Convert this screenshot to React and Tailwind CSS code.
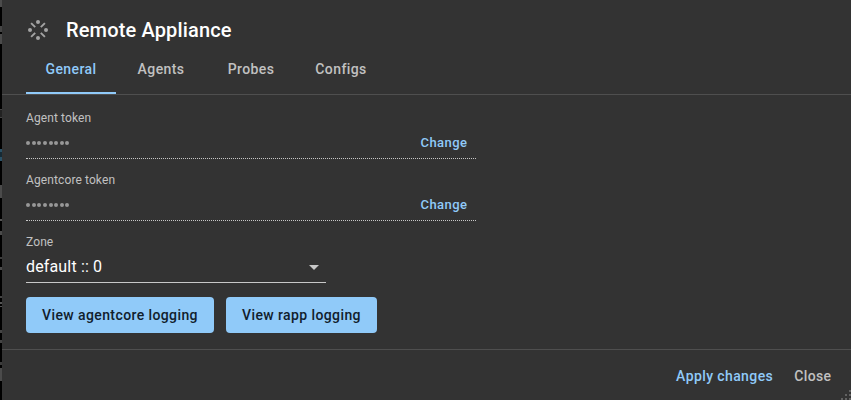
const slivers = [
  [0, 7, '#4b4b4b'], [26, 6, '#454545'], [34, 10, '#4b4b4b'], [109, 1, '#444444'], [110, 7, '#222222'], [117, 1, '#444444'],
  [149, 3, '#2b5267'], [152, 5, '#152a35'], [157, 4, '#2b5267'], [185, 13, '#4b4b4b'], [219, 2, '#555555'], [231, 4, '#4b4b4b'],
  [257, 2, '#3c3c3c'], [267, 3, '#4b4b4b'], [296, 2, '#444444'], [302, 2, '#555555'], [306, 1, '#555555'],
  [330, 3, '#444444'], [340, 3, '#444444'], [362, 3, '#3c3c3c'], [368, 13, '#4b4b4b'],
];

function PageSliver() {
  return (
    <div className="relative h-[400px] w-[2px] shrink-0 bg-black">
      {slivers.map(([y, h, color]) => (
        <div key={y} className="absolute left-0 w-[2px]" style={{ top: y, height: h, background: color }} />
      ))}
    </div>
  );
}

function HubIcon() {
  return (
    <svg width="24" height="24" viewBox="0 0 24 24" className="shrink-0 text-[#a4a4a4]" fill="currentColor">
      <circle cx="12" cy="4" r="2" />
      <circle cx="12" cy="20" r="2" />
      <circle cx="4" cy="12" r="2" />
      <circle cx="20" cy="12" r="2" />
      <path
        d="M5.1 5.1l4.1 4.1M18.9 5.1l-4.1 4.1M5.1 18.9l4.1-4.1M18.9 18.9l-4.1-4.1"
        stroke="currentColor"
        strokeWidth="1.9"
        fill="none"
      />
    </svg>
  );
}

function Tab({ label, active }) {
  return (
    <button
      className={
        'h-12 w-[90px] text-sm font-medium tracking-[0.4px] ' +
        (active ? 'border-b-2 border-[#90caf9] text-[#90caf9]' : 'pb-[2px] text-[#c1c1c1]')
      }
    >
      {label}
    </button>
  );
}

function TokenField({ label }) {
  return (
    <div className="h-[62px] w-[450px]">
      <div className="h-4 text-xs leading-4 tracking-[0.11px] text-[#c1c1c1]">{label}</div>
      <div className="flex h-8 items-center justify-between pr-[8.5px]">
        <div className="flex gap-[1.55px] pl-[0.4px] pt-px">
          {Array.from({ length: 8 }, (_, i) => (
            <span key={i} className="h-[4px] w-[4px] rounded-full bg-[#989898]" />
          ))}
        </div>
        <button className="pt-px text-[13px] font-medium tracking-[0.46px] text-[#90caf9]">Change</button>
      </div>
      <svg width="450" height="1" className="block" shapeRendering="crispEdges">
        <line x1="1" y1="0.5" x2="450" y2="0.5" stroke="#c8c8c8" strokeDasharray="1 1" />
        <line x1="0" y1="0.5" x2="1" y2="0.5" stroke="#c8c8c8" />
      </svg>
    </div>
  );
}

function LogButton({ label, className }) {
  return (
    <button
      className={
        'h-9 rounded-[4px] bg-[#90caf9] text-center text-sm font-medium tracking-[0.4px] text-[#11202c] ' + className
      }
    >
      {label}
    </button>
  );
}

export default function App() {
  return (
    <div className="flex h-[400px] w-[851px] overflow-hidden bg-black font-['Roboto',sans-serif]">
      <PageSliver />
      <div className="relative flex w-[849px] flex-col bg-[#333333]">
        <header className="flex h-[46px] items-center gap-4 pt-[14px] pl-6">
          <HubIcon />
          <h1 className="text-xl leading-8 font-medium tracking-[0.15px] text-white">Remote Appliance</h1>
        </header>
        <nav className="flex h-[49px] border-b border-[#4f4f4f] pl-6">
          <Tab label="General" active />
          <Tab label="Agents" />
          <Tab label="Probes" />
          <Tab label="Configs" />
        </nav>
        <main className="h-[254px] pt-[15px] pl-6">
          <TokenField label="Agent token" />
          <TokenField label="Agentcore token" />
          <div className="h-[63px] w-[300px]">
            <div className="h-4 text-xs leading-4 tracking-[0.11px] text-[#c1c1c1]">Zone</div>
            <div className="flex h-[33px] items-center justify-between border-b border-[#c8c8c8] pt-[2px] text-base tracking-[0.15px] text-white">
              <span>default :: 0</span>
              <svg width="24" height="24" viewBox="0 0 24 24" fill="#c8c8c8">
                <path d="M7 10l5 5 5-5z" />
              </svg>
            </div>
          </div>
          <div className="flex gap-3">
            <LogButton label="View agentcore logging" className="w-[188px]" />
            <LogButton label="View rapp logging" className="w-[151px]" />
          </div>
        </main>
        <footer className="flex h-[51px] items-center justify-end gap-[21px] border-t border-[#4f4f4f] pr-[19.5px] pt-px text-sm font-medium tracking-[0.4px]">
          <button className="text-[#90caf9]">Apply changes</button>
          <button className="text-[#c1c1c1]">Close</button>
        </footer>
        <svg width="10" height="10" className="absolute right-0 bottom-0" fill="#626262" shapeRendering="crispEdges">
          <path d="M8 0h2v2h-2zM4 4h2v2h-2zM8 4h2v2h-2zM0 8h2v2h-2zM4 8h2v2h-2zM8 8h2v2h-2z" />
        </svg>
      </div>
    </div>
  );
}
